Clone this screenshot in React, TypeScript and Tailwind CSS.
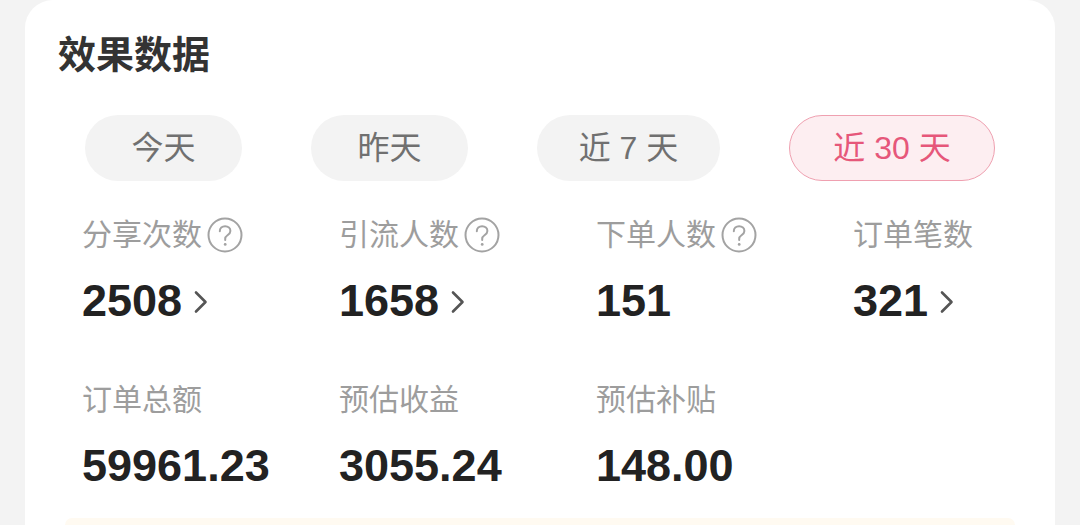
import { ReactNode } from "react";

const FONT = { fontFamily: '"Liberation Sans", "Noto Sans CJK SC", sans-serif' };

interface Metric {
  label: string;
  value: string;
  help?: boolean;
  arrow?: boolean;
}

const tabs = [
  { text: "今天", w: "w-[157px]" },
  { text: "昨天", w: "w-[157px]" },
  { text: "近 7 天", w: "w-[183px]" },
  { text: "近 30 天", w: "w-[206px]" },
];

const rows: Metric[][] = [
  [
    { label: "分享次数", value: "2508", help: true, arrow: true },
    { label: "引流人数", value: "1658", help: true, arrow: true },
    { label: "下单人数", value: "151", help: true },
    { label: "订单笔数", value: "321", arrow: true },
  ],
  [
    { label: "订单总额", value: "59961.23" },
    { label: "预估收益", value: "3055.24" },
    { label: "预估补贴", value: "148.00" },
  ],
];

function HelpIcon() {
  return (
    <svg width="36" height="36" viewBox="0 0 36 36" fill="none" className="ml-[5px]">
      <circle cx="18" cy="18" r="16.5" stroke="#a3a3a3" strokeWidth="2" />
      <path
        d="M12.8 14.2c0-3 2.3-5 5.3-5s5.3 2 5.3 4.7c0 2.2-1.3 3.2-2.9 4.3-1.5 1-2.3 1.8-2.3 3.6v1.2"
        stroke="#a3a3a3"
        strokeWidth="2"
        strokeLinecap="round"
      />
      <circle cx="18.2" cy="27.4" r="1.4" fill="#a3a3a3" />
    </svg>
  );
}

function Chevron() {
  return (
    <svg width="16" height="24" viewBox="0 0 16 24" fill="none" className="ml-[11px] mt-[2px]">
      <path d="M3 2.5l9.5 9.5L3 21.5" stroke="#555" strokeWidth="2.6" strokeLinecap="round" strokeLinejoin="round" />
    </svg>
  );
}

function Cell({ m }: { m: Metric }) {
  return (
    <div className="w-[257px] shrink-0">
      <div className="flex items-center h-[40px] text-[30px] text-[#9d9d9d] leading-[40px]">
        <span>{m.label}</span>
        {m.help && <HelpIcon />}
      </div>
      <div className="flex items-center h-[50px] mt-[21px]">
        <span className="text-[45px] font-bold text-[#222] leading-[50px]">{m.value}</span>
        {m.arrow && <Chevron />}
      </div>
    </div>
  );
}

function Pill({ children, active, w }: { children: ReactNode; active?: boolean; w: string }) {
  return (
    <div
      className={
        active
          ? `${w} h-[66px] rounded-full flex items-center justify-center text-[32px] bg-[#fdeef1] text-[#e6577a] border-[1.5px] border-[#efa0b0]`
          : `${w} h-[66px] rounded-full flex items-center justify-center text-[32px] bg-[#f3f3f3] text-[#707070]`
      }
    >
      {children}
    </div>
  );
}

export default function App() {
  return (
    <div className="w-[1080px] h-[525px] overflow-hidden bg-[#f3f3f3]" style={FONT}>
      <div className="mx-[25px] h-full bg-white rounded-t-[28px] pt-[34px] flex flex-col">
        <h1 className="pl-[33px] text-[38px] leading-[42px] font-bold text-[#333]">效果数据</h1>

        <div className="flex gap-[69px] pl-[60px] mt-[39px]">
          {tabs.map((t, i) => (
            <Pill key={t.text} active={i === 3} w={t.w}>
              {t.text}
            </Pill>
          ))}
        </div>

        <div className="pl-[57px] mt-[34px] flex flex-col gap-[54px]">
          {rows.map((row, i) => (
            <div key={i} className="flex">
              {row.map((m) => (
                <Cell key={m.label} m={m} />
              ))}
            </div>
          ))}
        </div>

        <div className="mx-[40px] mt-[27px] h-[40px] rounded-t-[20px] bg-[#fffaf1]" />
      </div>
    </div>
  );
}
